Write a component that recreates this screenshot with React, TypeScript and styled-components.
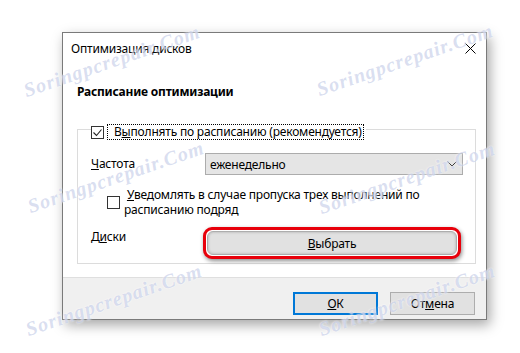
import styled, { createGlobalStyle } from "styled-components";

const GlobalStyle = createGlobalStyle`
  html, body {
    margin: 0;
    padding: 0;
    background: #ffffff;
  }
  body {
    font-family: "Noto Sans", "Liberation Sans", sans-serif;
    font-size: 12px;
    letter-spacing: -0.2px;
    color: #000;
  }
`;

const marks = [
  { x: 112, y: 61 },
  { x: 405, y: 60 },
  { x: 116, y: 177 },
  { x: 407, y: 178 },
  { x: 114, y: 300 },
  { x: 407, y: 300 },
];

const CheckMark = () => (
  <svg width="11" height="11" viewBox="0 0 11 11">
    <path d="M1.5 5.5 L4.5 8.5 L9.5 2.5" fill="none" stroke="#222" strokeWidth="1.1" />
  </svg>
);

const Chevron = () => (
  <svg width="10" height="6" viewBox="0 0 10 6">
    <path d="M0.5 0.5 L5 5 L9.5 0.5" fill="none" stroke="#333" strokeWidth="1" />
  </svg>
);

const CloseIcon = () => (
  <svg width="11" height="11" viewBox="0 0 11 11">
    <path d="M0.5 0.5 L10.5 10.5 M10.5 0.5 L0.5 10.5" stroke="#000" strokeWidth="1" />
  </svg>
);

const App = () => {
  return (
    <Page>
      <GlobalStyle />
      <Window>
        <TitleBar>
          <Title>Оптимизация дисков</Title>
          <CloseButton>
            <CloseIcon />
          </CloseButton>
        </TitleBar>
        <Body>
          <Heading>Расписание оптимизации</Heading>
          <Group>
            <Legend>
              <Box>
                <CheckMark />
              </Box>
              <FocusLabel>
                В<u>ы</u>полнять по расписанию (рекомендуется)
              </FocusLabel>
            </Legend>
            <Row>
              <Label>
                <u>Ч</u>астота
              </Label>
              <Select>
                <span>еженедельно</span>
                <Chevron />
              </Select>
            </Row>
            <NotifyRow>
              <Box />
              <NotifyText>
                {"\u00a0"}
                <u>У</u>ведомлять в случае пропуска трех выполнений по
                <br />
                расписанию подряд
              </NotifyText>
            </NotifyRow>
            <DiskRow>
              <DiskLabel>
                Д<u>и</u>ски
              </DiskLabel>
              <Highlight>
                <PickButton>
                  <u>В</u>ыбрать
                </PickButton>
              </Highlight>
            </DiskRow>
          </Group>
        </Body>
        <Footer>
          <Button $primary>
            <u>О</u>К
          </Button>
          <Button>
            От<u>м</u>ена
          </Button>
        </Footer>
      </Window>
      {marks.map((m, i) => (
        <Watermark key={i} style={{ left: m.x, top: m.y }}>
          Soringpcrepair.Com
        </Watermark>
      ))}
    </Page>
  );
};

export default App;

const Page = styled.div`
  position: relative;
  width: 520px;
  height: 353px;
  overflow: hidden;
  padding: 32px 0 0 62px;
  box-sizing: border-box;
`;

const Window = styled.div`
  width: 425px;
  height: 288px;
  box-sizing: border-box;
  border: 1px solid #7a7a7a;
  background: #ffffff;
  display: flex;
  flex-direction: column;
  box-shadow: 3px 5px 12px rgba(0, 0, 0, 0.35);
`;

const TitleBar = styled.div`
  height: 30px;
  display: flex;
  align-items: center;
  justify-content: space-between;
  padding: 0 10px 0 8px;
`;

const Title = styled.div`
  font-size: 12px;
`;

const CloseButton = styled.div`
  display: flex;
  align-items: center;
`;

const Body = styled.div`
  flex: 1;
  padding: 0 11px 0 14px;
`;

const Heading = styled.div`
  margin-top: 21px;
  line-height: 16px;
  font-weight: bold;
`;

const Group = styled.div`
  margin-top: 29px;
  width: 399px;
  height: 135px;
  box-sizing: border-box;
  border: 1px solid #dcdcdc;
  padding: 0 0 0 13px;
`;

const Legend = styled.div`
  display: flex;
  width: fit-content;
  align-items: center;
  gap: 3px;
  margin-top: -6px;
  background: #fff;
  padding-right: 2px;
`;

const Box = styled.div`
  width: 13px;
  height: 13px;
  box-sizing: border-box;
  border: 1px solid #333;
  background: #fff;
  display: flex;
  align-items: center;
  justify-content: center;
  flex-shrink: 0;
`;

const FocusLabel = styled.span`
  border: 1px dotted #000;
  padding: 0 1px 0 6px;
  line-height: 14px;
`;

const Row = styled.div`
  display: flex;
  align-items: center;
  margin-top: 13px;
`;

const Label = styled.div`
  width: 114px;
  flex-shrink: 0;
  line-height: 16px;
`;

const Select = styled.div`
  width: 258px;
  height: 22px;
  box-sizing: border-box;
  border: 1px solid #acacac;
  background: #e5e5e5;
  display: flex;
  align-items: center;
  justify-content: space-between;
  padding: 0 5px 0 4px;
`;

const NotifyRow = styled.div`
  display: flex;
  align-items: center;
  gap: 4px;
  margin-top: 12px;
  padding-left: 16px;
`;

const NotifyText = styled.div`
  line-height: 15px;
`;

const DiskRow = styled.div`
  display: flex;
  align-items: flex-start;
  margin-top: 10px;
`;

const DiskLabel = styled(Label)`
  margin-top: 2px;
`;

const Highlight = styled.div`
  margin-left: -2px;
  padding: 1px;
  background: #fff;
  border: 3px solid #e8000b;
  border-radius: 9px;
  box-shadow: 1px 2px 4px rgba(0, 0, 0, 0.45);
`;

const PickButton = styled.div`
  width: 250px;
  height: 24px;
  box-sizing: border-box;
  border: 1px solid #adadad;
  border-radius: 6px;
  background: #e1e1e1;
  display: flex;
  align-items: center;
  justify-content: center;
  box-shadow: inset 0 0 3px rgba(0, 0, 0, 0.25);
`;

const Footer = styled.div`
  height: 42px;
  border-top: 1px solid #dfdfdf;
  background: #f0f0f0;
  display: flex;
  justify-content: flex-end;
  align-items: flex-start;
  gap: 12px;
  padding: 14px 11px 0 0;
  box-sizing: border-box;
`;

const Button = styled.div<{ $primary?: boolean }>`
  width: 85px;
  height: 23px;
  box-sizing: border-box;
  background: #e1e1e1;
  border: ${(p) => (p.$primary ? "2px solid #0078d7" : "1px solid #adadad")};
  display: flex;
  align-items: center;
  justify-content: center;
`;

const Watermark = styled.div`
  position: absolute;
  transform: translate(-50%, -50%) rotate(-19deg);
  font-family: "Liberation Serif", serif;
  font-style: italic;
  font-weight: bold;
  font-size: 20px;
  letter-spacing: 1px;
  white-space: nowrap;
  color: rgba(165, 178, 220, 0.42);
  text-shadow: 0 0 2px rgba(255, 255, 255, 0.9);
  pointer-events: none;
`;
